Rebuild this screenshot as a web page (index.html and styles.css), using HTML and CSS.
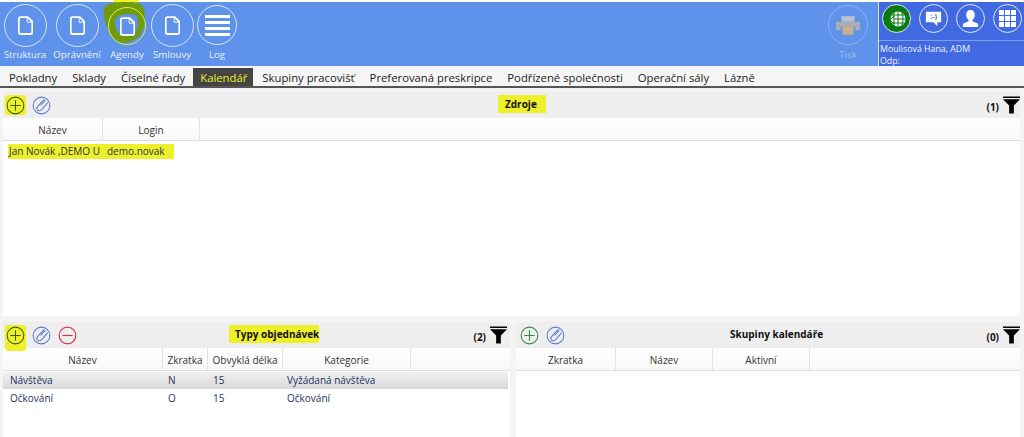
FILE: index.html
```html
<!DOCTYPE html>
<html lang="cs">
<head>
<meta charset="utf-8">
<title>Kalendář</title>
<link rel="stylesheet" href="styles.css">
</head>
<body>
<svg width="0" height="0" class="defs">
  <symbol id="doc" viewBox="0 0 16 20"><path d="M2.500 1H10l5 5V17a2 2 0 0 1-2 2H2.500a2 2 0 0 1-2-2V3a2 2 0 0 1 2-2z" transform="translate(.3 0)" fill="none" stroke="#fff" stroke-width="2"/><path d="M9.800 1.500v5H15" fill="none" stroke="#fff" stroke-width="1"/></symbol>
  <symbol id="plus" viewBox="0 0 20 20"><circle cx="10" cy="10" r="8.800" fill="none" stroke="currentColor" stroke-width="1.100"/><path d="M10 4.500v11M4.500 10h11" stroke="currentColor" stroke-width="1.100"/></symbol>
  <symbol id="minus" viewBox="0 0 20 20"><circle cx="10" cy="10" r="8.800" fill="none" stroke="#d9304a" stroke-width="1.200"/><path d="M4.500 10h11" stroke="#d9304a" stroke-width="1.200"/></symbol>
  <symbol id="edit" viewBox="0 0 20 20"><circle cx="10" cy="10" r="8.800" fill="none" stroke="#5a78d0" stroke-width="1.100"/><path d="M5.500 14.500c-1-1.500 0-3 1-4L13 3.500M7.500 15.500c1 0 2-.5 3-1.500l6-7M5.500 14.500c.5.700 1.200 1 2 1M9 10l5-5.500" fill="none" stroke="#5a78d0" stroke-width="1.100"/></symbol>
  <symbol id="funnel" viewBox="0 0 18 18"><path d="M0 0h18v1.600H0zM0 3h18l-6.500 6.500V18h-5V9.500z" fill="#000"/></symbol>
</svg>
<div class="app">
  <header class="top">
    <nav class="mods">
      <div class="mod m1"><div class="ringbox"><span class="ring"><svg class="ic-doc"><use href="#doc"/></svg></span></div><span class="lbl">Struktura</span></div>
      <div class="mod m2"><div class="ringbox"><span class="ring"><svg class="ic-doc"><use href="#doc"/></svg></span></div><span class="lbl">Oprávnění</span></div>
      <div class="mod m3"><svg class="scribble" viewBox="0 0 44 46"><ellipse cx="23" cy="1" rx="13" ry="2.500" fill="#eef02a"/><path d="M1 8C4 3 10 2 24 2c10 0 16 1 17 8 2 10 1 18-5 26-6 6-16 9-22 5C7 36-1 20 1 8z" fill="#6f9b0c"/><path d="M13 18c5-4 14-5 20-3 3 6 3 14-3 20-6 2-13 1-15-3-3-4-4-10-2-14z" fill="#5f92ea"/></svg><div class="ringbox"><span class="ring"><svg class="ic-doc"><use href="#doc"/></svg></span></div><span class="lbl">Agendy</span></div>
      <div class="mod m4"><div class="ringbox"><span class="ring"><svg class="ic-doc"><use href="#doc"/></svg></span></div><span class="lbl">Smlouvy</span></div>
      <div class="mod m5"><div class="ringbox"><span class="ring"><span class="bars"><i></i><i></i><i></i><i></i></span></span></div><span class="lbl">Log</span></div>
    </nav>
    <div class="print">
      <span class="ring ring-off"><svg viewBox="0 0 28 24" width="26" height="23"><path d="M7 2h14v6H7z" fill="#bcc3ce"/><path d="M1 8h26v9h-5v-4H6v4H1z" fill="#a9adb4"/><path d="M8 13h12v9H8z" fill="#c9ae8e"/></svg></span>
      <span class="lbl lbl-off">Tisk</span>
    </div>
    <aside class="user">
      <div class="user-icons">
        <span class="uic uic-green"><svg viewBox="0 0 20 20" width="20" height="20"><circle cx="11" cy="10" r="7.500" fill="#fff"/><path d="M11 2.500v15M3.500 10h15M5 6h12M5 14h12M7.500 3.500c-2 4-2 9 0 13M14.500 3.500c2 4 2 9 0 13" stroke="#0a7a12" stroke-width="1" fill="none"/><path d="M7.500 6.500L2.500 11l5 4.500z" fill="#0a7a12"/><path d="M6.500 8.500L3.500 11l3 2.500z" fill="#fff"/></svg></span>
        <span class="uic"><svg viewBox="0 0 22 22" width="21" height="21"><path d="M3 4h16v11h-4v4l-4-4H3z" fill="#fff"/><text x="11" y="12" class="smile">:-)</text></svg></span>
        <span class="uic"><svg viewBox="0 0 22 22" width="21" height="21"><path d="M11 2c3 0 4.500 2.200 4.500 5 0 2.500-1.200 4.500-2.500 5.500V14l6 2.500V20H3v-3.500L9 14v-1.500C7.700 11.500 6.500 9.500 6.500 7c0-2.800 1.500-5 4.500-5z" fill="#fff"/></svg></span>
        <span class="uic"><span class="grid9"><i></i><i></i><i></i><i></i><i></i><i></i><i></i><i></i><i></i></span></span>
      </div>
      <div class="user-info"><div>Moulisová Hana, ADM</div><div>Odp:</div></div>
    </aside>
  </header>

  <div class="tabs">
    <span class="tab">Pokladny</span><span class="tab">Sklady</span><span class="tab">Číselné řady</span><span class="tab tab-on">Kalendář</span><span class="tab">Skupiny pracovišť</span><span class="tab">Preferovaná preskripce</span><span class="tab">Podřízené společnosti</span><span class="tab">Operační sály</span><span class="tab">Lázně</span>
  </div>

  <main class="content">
    <section class="panel panel-top">
      <div class="bar">
        <div class="tools"><span class="hl-ic"><svg class="ti ti-k"><use href="#plus"/></svg></span><svg class="ti"><use href="#edit"/></svg></div>
        <div class="bar-title"><span class="mark mark-z">Zdroje</span></div>
        <div class="bar-r"><b>(1)</b><svg class="fn"><use href="#funnel"/></svg></div>
      </div>
      <div class="thead">
        <span class="th w-a">Název</span><span class="th w-b">Login</span>
      </div>
      <div class="row row-src"><span class="mark mark-row"><span class="cut">Jan Novák ,DEMO U</span><span class="login">demo.novak</span></span></div>
    </section>

    <div class="lower">
      <section class="panel panel-l">
        <div class="bar">
          <div class="tools"><span class="hl-ic hl-tall"><svg class="ti ti-k"><use href="#plus"/></svg></span><svg class="ti"><use href="#edit"/></svg><svg class="ti"><use href="#minus"/></svg></div>
          <div class="bar-title title-l"><span class="mark mark-t">Typy objednávek</span></div>
          <div class="bar-r"><b>(2)</b><svg class="fn"><use href="#funnel"/></svg></div>
        </div>
        <div class="thead">
          <span class="th c1">Název</span><span class="th c2">Zkratka</span><span class="th c3">Obvyklá délka</span><span class="th c4">Kategorie</span>
        </div>
        <div class="row row-data row-sel"><span class="c1 td">Návštěva</span><span class="c2 td">N</span><span class="c3 td">15</span><span class="c4 td">Vyžádaná návštěva</span></div>
        <div class="row row-data"><span class="c1 td">Očkování</span><span class="c2 td">O</span><span class="c3 td">15</span><span class="c4 td">Očkování</span></div>
      </section>
      <section class="panel panel-r">
        <div class="bar">
          <div class="tools"><svg class="ti ti-g"><use href="#plus"/></svg><svg class="ti"><use href="#edit"/></svg></div>
          <div class="bar-title title-r">Skupiny kalendáře</div>
          <div class="bar-r"><b>(0)</b><svg class="fn"><use href="#funnel"/></svg></div>
        </div>
        <div class="thead">
          <span class="th d1">Zkratka</span><span class="th d2">Název</span><span class="th d3">Aktivní</span>
        </div>
      </section>
    </div>
  </main>
</div>
</body>
</html>
```
FILE: styles.css
```css
* { box-sizing: border-box; }
html, body { margin: 0; padding: 0; }
body { background: #fff; font-family: "Open Sans", "Noto Sans", sans-serif; color: #222; overflow: hidden; }
.defs { position: absolute; }
.app { width: 1024px; height: 437px; display: flex; flex-direction: column; padding-top: 2px; overflow: hidden; }

.top { height: 64px; flex: none; background: #5f92ea; display: flex; color: #fff; }
.mods { display: flex; flex: 1; }
.mod { position: relative; display: flex; flex-direction: column; align-items: center; }
.m1 { width: 50px; }
.m2 { width: 54px; }
.m3 { width: 46px; }
.m4 { width: 44px; }
.m5 { width: 46px; }
.ringbox { height: 46px; padding-top: 2px; position: relative; flex: none; }
.ring { position: relative; width: 43px; height: 43px; border: 1.500px solid #dbe6fa; border-radius: 50%; display: flex; align-items: center; justify-content: center; flex: none; }
.m5 .ring { width: 40px; height: 40px; margin-top: 1px; }
.m3 .ring { width: 38px; height: 38px; margin-top: 3px; border: 1px solid #e3ef3a; }
.scribble { position: absolute; left: -1px; top: -2px; width: 44px; height: 46px; overflow: hidden; }
.ic-doc { width: 15px; height: 19px; position: relative; }
.lbl { font-size: 9.700px; line-height: 14px; color: #eaf0fc; white-space: nowrap; position: relative; }
.bars { display: flex; flex-direction: column; gap: 3px; width: 25px; }
.bars i { display: block; height: 3px; background: #fff; }
.print { width: 40px; margin-right: 10px; padding-top: 3px; display: flex; flex-direction: column; align-items: center; }
.ring-off { width: 40px; height: 40px; border: 1px solid #8fb0ee; flex: none; }
.lbl-off { color: #9fbcf0; margin-top: 3px; }
.user { width: 146px; border-left: 1px solid #cfe0fa; background: #4169e1; display: flex; flex-direction: column; }
.user-icons { height: 39px; display: flex; gap: 8px; padding: 2px 0 0 3px; border-bottom: 1px solid #7f9eea; flex: none; }
.uic { width: 29px; height: 29px; border: 1.500px solid #dfe7fa; border-radius: 50%; display: flex; align-items: center; justify-content: center; flex: none; }
.uic-green { background: #0a7a12; }
.smile { font: 700 8px "Open Sans", sans-serif; fill: #4169e1; text-anchor: middle; }
.grid9 { display: grid; grid-template-columns: repeat(3, 5px); grid-auto-rows: 5px; gap: 1px; }
.grid9 i { background: #fff; }
.user-info { font-size: 8.800px; line-height: 12px; padding: 2px 0 0 1px; color: #f2f5fd; }

.tabs { height: 22px; flex: none; background: #f5f5f5; border-bottom: 2px solid #555; display: flex; padding: 2px 0 0 2px; font-size: 11.300px; line-height: 20px; color: #222; }
.tab { padding: 0 6px 0 7px; margin-right: 2px; white-space: nowrap; }
.tab-on { background: #444; color: #eef02a; }

.content { flex: 1; min-height: 0; background: #f4f4f4; padding: 4px 4px 0 3px; display: flex; flex-direction: column; gap: 6px; }
.panel { background: #fff; display: flex; flex-direction: column; overflow: hidden; }
.panel-top { height: 224px; flex: none; }
.lower { flex: 1; min-height: 0; display: flex; gap: 6px; }
.panel-l { width: 507px; flex: none; }
.panel-r { flex: 1; min-width: 0; }

.bar { height: 26px; flex: none; background: #eee; display: flex; align-items: center; position: relative; }
.tools { display: flex; gap: 7px; padding: 4px 0 0 4px; align-items: flex-start; height: 26px; width: 480px; flex: none; }
.panel-l .tools, .panel-r .tools { width: 180px; }
.ti { width: 19px; height: 19px; display: block; flex: none; color: #2e8b46; }
.ti-k { color: #3c5a00; }
.hl-ic { display: block; position: relative; background: #eef02a; border-radius: 3px; height: 20px; width: 21px; margin: -1px -1px 0 -2px; padding: 1px; }
.hl-tall { height: 26px; }
.bar-title { flex: 1; font-size: 10px; font-weight: 700; color: #111; white-space: nowrap; padding-bottom: 2px; }
.title-l { padding-left: 46px; }
.title-r { padding-left: 34px; }
.mark { background: #eef02a; }
.mark-z { padding: 2px 9px 2px 7px; margin-left: 15px; }
.mark-t { padding: 2px 0 2px 6px; }
.bar-r { display: flex; align-items: center; gap: 4px; font-size: 10px; color: #111; height: 26px; }
.panel-l .bar-r { padding-right: 3px; }
.bar-r b { margin-top: 4px; }
.fn { width: 17px; height: 18px; display: block; margin-top: -1px; }

.thead { height: 23px; flex: none; display: flex; background: linear-gradient(#fff, #f8f8f8); border-bottom: 1px solid #dedede; font-size: 10px; color: #333; }
.th { border-right: 1px solid #e3e3e3; text-align: center; line-height: 24px; flex: none; white-space: nowrap; }
.w-a { width: 100px; }
.w-b { width: 97px; }
.c1 { width: 160px; flex: none; }
.c2 { width: 45px; flex: none; }
.c3 { width: 75px; flex: none; }
.c4 { width: 128px; flex: none; }
.d1 { width: 100px; }
.d2 { width: 97px; }
.d3 { width: 97px; }

.row { font-size: 10px; color: #26305e; }
.row-src { padding: 3px 0 0 5px; color: #2b3550; line-height: 15px; }
.mark-row { display: inline-flex; padding-right: 9px; }
.cut { width: 92px; overflow: hidden; white-space: nowrap; padding-left: 1px; }
.login { margin-left: 7px; }
.row-data { display: flex; height: 17px; line-height: 17px; margin-top: 1px; }
.row-sel { background: linear-gradient(#f0f0f0, #d9d9dc); margin-right: 2px; }
.td { padding-left: 7px; white-space: nowrap; }
.c2.td { padding-left: 5px; }
.c3.td { padding-left: 5px; }
.c4.td { padding-left: 4px; }
```
